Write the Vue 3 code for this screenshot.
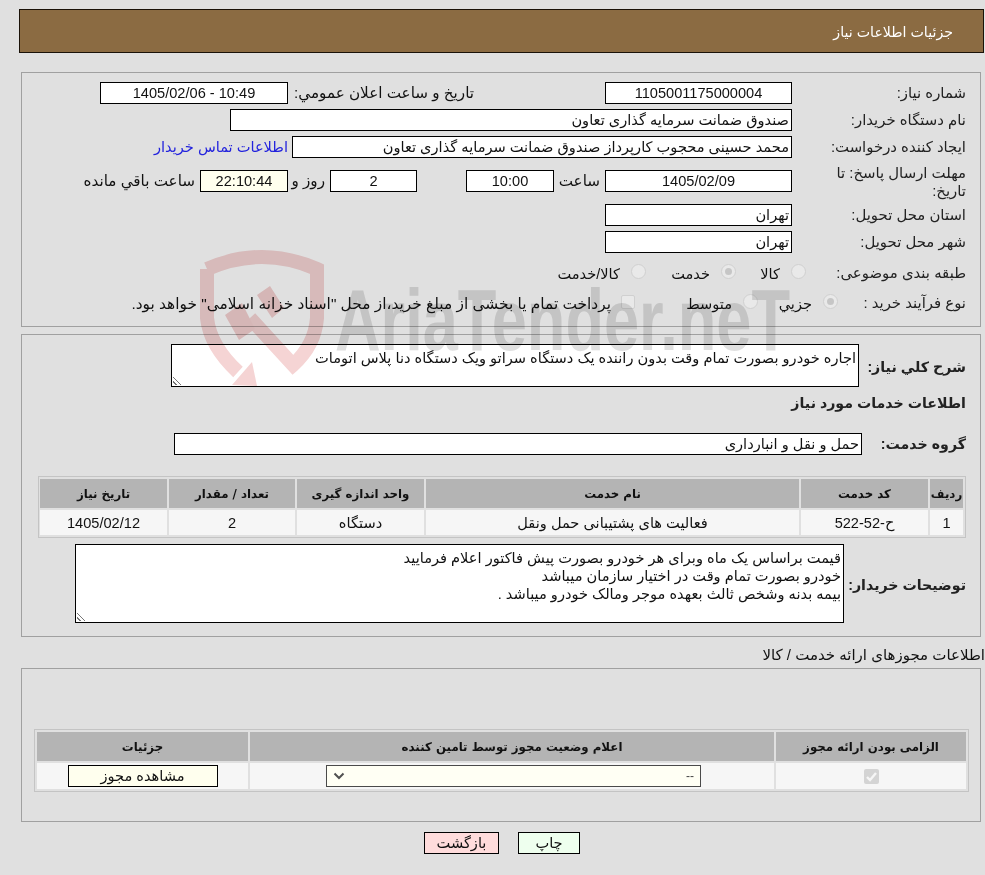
<template>
  <div class="page" dir="rtl">
    <div class="page-head">جزئیات اطلاعات نیاز</div>

    <div class="panel panel-main">
      <div class="row r1">
        <label class="lbl">شماره نیاز:</label>
        <div class="box w-187 center">1105001175000004</div>
        <span class="txt t-announce">تاریخ و ساعت اعلان عمومي:</span>
        <div class="box w-188 center">10:49 - 1405/02/06</div>
      </div>
      <div class="row r2">
        <label class="lbl">نام دستگاه خریدار:</label>
        <div class="box w-562">صندوق ضمانت سرمایه گذاری تعاون</div>
      </div>
      <div class="row r3">
        <label class="lbl">ایجاد کننده درخواست:</label>
        <div class="box w-500">محمد حسینی محجوب کارپرداز صندوق ضمانت سرمایه گذاری تعاون</div>
        <a class="link">اطلاعات تماس خریدار</a>
      </div>
      <div class="row r4">
        <label class="lbl two">مهلت ارسال پاسخ: تا تاریخ:</label>
        <div class="box w-187 center">1405/02/09</div>
        <span class="txt t-hour">ساعت</span>
        <div class="box w-88 center">10:00</div>
        <div class="box w-87 center b-day">2</div>
        <span class="txt t-day">روز و</span>
        <div class="box w-88 center cream">22:10:44</div>
        <span class="txt t-left">ساعت باقي مانده</span>
      </div>
      <div class="row r5">
        <label class="lbl">استان محل تحویل:</label>
        <div class="box w-187">تهران</div>
      </div>
      <div class="row r6">
        <label class="lbl">شهر محل تحویل:</label>
        <div class="box w-187">تهران</div>
      </div>
      <div class="row r7">
        <label class="lbl up">طبقه بندی موضوعی:</label>
        <div class="opts opts-a">
          <span class="radio"></span><span class="opt o-1">کالا</span>
          <span class="radio on"></span><span class="opt o-2">خدمت</span>
          <span class="radio"></span><span class="opt">کالا/خدمت</span>
        </div>
      </div>
      <div class="row r8">
        <label class="lbl up">نوع فرآیند خرید :</label>
        <div class="opts opts-b">
          <span class="radio on"></span><span class="opt o-4">جزيي</span>
          <span class="radio"></span><span class="opt o-5">متوسط</span>
          <span class="check-empty"></span>
          <span class="opt opt-long">پرداخت تمام یا بخشی از مبلغ خرید،از محل "اسناد خزانه اسلامی" خواهد بود.</span>
        </div>
      </div>
    </div>

    <div class="panel panel-need">
      <div class="row n1">
        <label class="blbl l-desc">شرح کلي نیاز:</label>
        <div class="area a-desc">اجاره خودرو بصورت تمام وقت بدون راننده یک دستگاه سراتو ویک دستگاه دنا پلاس اتومات<i class="grip"></i></div>
      </div>
      <div class="sub">اطلاعات خدمات مورد نیاز</div>
      <div class="row n2">
        <label class="blbl l-group">گروه خدمت:</label>
        <div class="box w-688">حمل و نقل و انبارداری</div>
      </div>
      <div class="grid grid-items">
        <div class="th">ردیف</div>
        <div class="th">کد خدمت</div>
        <div class="th">نام خدمت</div>
        <div class="th">واحد اندازه گیری</div>
        <div class="th">تعداد / مقدار</div>
        <div class="th">تاریخ نیاز</div>
        <div class="td">1</div>
        <div class="td">ح-52-522</div>
        <div class="td">فعالیت های پشتیبانی حمل ونقل</div>
        <div class="td">دستگاه</div>
        <div class="td">2</div>
        <div class="td">1405/02/12</div>
      </div>
      <div class="row n3">
        <label class="blbl l-note">توضیحات خریدار:</label>
        <div class="area a-note">قیمت براساس یک ماه وبرای هر خودرو بصورت پیش فاکتور اعلام فرمایید<br>خودرو بصورت تمام وقت در اختیار سازمان میباشد<br>بیمه بدنه وشخص ثالث بعهده موجر ومالک خودرو میباشد .<i class="grip"></i></div>
      </div>
    </div>

    <div class="lic-title">اطلاعات مجوزهای ارائه خدمت / کالا</div>
    <div class="panel panel-lic">
      <div class="grid grid-lic">
        <div class="th">الزامی بودن ارائه مجوز</div>
        <div class="th">اعلام وضعیت مجوز توسط تامین کننده</div>
        <div class="th">جزئیات</div>
        <div class="td"><span class="tick"><svg width="15" height="15" viewBox="0 0 15 15"><path d="M3 8 L6 11 L12 4" fill="none" stroke="#f6f6f6" stroke-width="2.4"/></svg></span></div>
        <div class="td">
          <div class="select">
            <span>--</span>
            <svg width="12" height="8" viewBox="0 0 12 8"><path d="M1.5 1.5 L6 6 L10.5 1.5" fill="none" stroke="#505050" stroke-width="2"/></svg>
          </div>
        </div>
        <div class="td"><button class="view">مشاهده مجوز</button></div>
      </div>
    </div>

    <div class="actions">
      <button class="act print">چاپ</button>
      <button class="act back">بازگشت</button>
    </div>

    <!-- watermark lies over everything, multiplied so text stays readable -->
    <svg class="mark" width="985" height="875" viewBox="0 0 985 875">
      <path d="M207 269 Q262 245 317 269 V318 Q315 345 293 365 L250 318" fill="none" stroke="#f5d4d4" stroke-width="14"/>
      <path d="M207 269 V318 Q210 346 238 372" fill="none" stroke="#f5d4d4" stroke-width="14"/>
      <path d="M232 385 L252 362 L257 386 Z" fill="#f5d4d4"/>
      <path d="M225 315 L242 303 L255 329 L239 340 Z M257 295 L270 286 L284 308 L272 318 Z" fill="#f3d0d0"/>
      <text x="335" y="350" textLength="455" lengthAdjust="spacingAndGlyphs" class="mark-text">AriaTender.neT</text>
    </svg>
  </div>
</template>

<script setup>
</script>

<style>
html, body { background: #e0e0e0; }
</style>

<style scoped>
.page {
  position: relative; width: 985px; height: 875px; overflow: hidden;
  background: #e0e0e0; padding-top: 9px; box-sizing: border-box;
  font-family: "Liberation Sans", "DejaVu Sans", sans-serif; font-size: 14.6px; color: #111;
}
.mark { position: absolute; left: 0; top: 0; direction: ltr; mix-blend-mode: multiply; pointer-events: none; }
.mark-text { font-family: "Liberation Sans", sans-serif; font-weight: 700; font-size: 88px; fill: #e0e0e0; }

.page-head {
  margin: 0 1px 0 19px; height: 44px; box-sizing: border-box;
  background: #8b6b42; border: 1px solid #1a1208;
  color: #fff; font-size: 14.2px; line-height: 44px; padding-right: 30px;
}

.panel {
  margin: 0 4px 0 21px; box-sizing: border-box;
  border: 1px solid #a0a0a0; padding: 1px 0 0 1px;
}
.panel-main { margin-top: 19px; height: 255px; }
.panel-need { margin-top: 7px; height: 303px; }
.panel-lic { margin-top: 3px; height: 154px; }

.row { display: flex; align-items: flex-start; }
.lbl {
  width: 188px; flex-shrink: 0; padding-right: 14px; box-sizing: border-box;
  font-size: 14.9px; line-height: 22px; color: #222;
}
.lbl.two { line-height: 18px; margin-top: -6px; padding-left: 30px; }
.lbl.up { margin-top: -1px; }
.txt { font-size: 15.2px; line-height: 22px; white-space: nowrap; flex-shrink: 0; }

.box {
  height: 22px; box-sizing: border-box; background: #fff; border: 1px solid #000;
  line-height: 20px; padding: 0 2px; white-space: nowrap; overflow: hidden; flex-shrink: 0;
}
.center { text-align: center; }
.cream { background: #ffffee; }
.w-187 { width: 187px; }
.w-188 { width: 188px; }
.w-562 { width: 562px; }
.w-500 { width: 500px; }
.w-88 { width: 88px; }
.w-87 { width: 87px; }
.w-688 { width: 688px; }

.r1 { margin-top: 8px; }
.r2 { margin-top: 5px; }
.r3 { margin-top: 5px; }
.r4 { margin-top: 12px; height: 21px; }
.r5 { margin-top: 13px; }
.r6 { margin-top: 5px; }
.r7 { margin-top: 10px; }
.r8 { margin-top: 8px; }

.t-announce { margin-right: 131px; margin-left: 5px; width: 181px; }
.t-hour { margin: 0 5px; width: 41px; }
.b-day { margin-right: 49px; }
.t-day { margin-right: 5px; width: 37px; }
.t-left { margin-right: 5px; }
.link { color: #2222dd; margin-right: 4px; line-height: 22px; white-space: nowrap; }

.opts { display: flex; align-items: center; height: 22px; white-space: nowrap; }
.opts-a { margin-right: -14px; }
.opts-b { margin-right: -46px; }
.opt { line-height: 22px; }
.opt-long { font-size: 15.4px; }
.radio {
  width: 15px; height: 15px; box-sizing: border-box; border-radius: 50%; border: 1px solid #d0d0d0; background: #e9e9e9;
  position: relative; flex-shrink: 0; margin: -5px 0 0 11px;
}
.radio.on::after {
  content: ""; position: absolute; inset: 3px; border-radius: 50%; background: #c6c6c6;
}
.o-1 { width: 44px; }
.o-2 { width: 64px; }
.o-4 { width: 54px; }
.o-5 { width: 97px; }
.check-empty {
  width: 14px; height: 14px; box-sizing: border-box; border: 1px solid #d0d0d0; border-radius: 2px; background: #e9e9e9;
  flex-shrink: 0; margin: -5px 0 0 10px;
}

.blbl { font-weight: 700; font-size: 14.2px; color: #222; white-space: nowrap; flex-shrink: 0; }
.n1 { margin-top: 8px; height: 43px; }
.l-desc { width: 121px; padding-right: 14px; box-sizing: border-box; line-height: 46px; }
.l-group { width: 118px; padding-right: 14px; box-sizing: border-box; line-height: 22px; }
.l-note { width: 136px; padding-right: 14px; box-sizing: border-box; line-height: 82px; }

.area {
  position: relative; background: #fff; border: 1px solid #000; box-sizing: border-box;
  padding: 4px 2px; line-height: 18px; overflow: hidden;
}
.a-desc { width: 688px; height: 43px; }
.a-note { width: 769px; height: 79px; }
.grip {
  position: absolute; left: 1px; bottom: 1px; width: 9px; height: 9px;
  background: repeating-linear-gradient(45deg, transparent 0 2px, #777 2px 3px);
  clip-path: polygon(0 0, 100% 100%, 0 100%);
}

.sub { font-weight: 700; font-size: 14.2px; color: #222; padding-right: 14px; margin-top: 5px; line-height: 22px; }
.n2 { margin-top: 19px; }

.grid {
  display: grid; gap: 2px; padding: 2px; background: #e0e0e0;
  border: 1px solid #c4c4c4; box-sizing: border-box;
}
.grid-items {
  margin: 21px 14px 0 15px; height: 62px;
  grid-template-columns: 33px 127px 373px 127px 126px 127px;
  grid-template-rows: 29px 25px;
}
.grid-lic {
  margin: 59px 11px 0 11px; height: 63px;
  grid-template-columns: 190px 524px 211px;
  grid-template-rows: 29px 26px;
}
.th {
  background: #b4b4b4; font-family: "DejaVu Sans", sans-serif; font-weight: 700; font-size: 11.8px; color: #111;
  display: flex; align-items: center; justify-content: center; white-space: nowrap;
}
.td {
  background: #f6f6f6;
  display: flex; align-items: center; justify-content: center; white-space: nowrap;
}
.n3 { margin-top: 6px; height: 79px; }

.lic-title { margin-top: 8px; line-height: 20px; height: 20px; font-size: 15px; white-space: nowrap; }

.tick {
  width: 15px; height: 15px; background: #d4d4d4; border-radius: 2px; display: block; line-height: 0;
}
.select {
  width: 375px; height: 22px; box-sizing: border-box; margin-right: -3px;
  border: 1px solid #4a4a4a; background: #fffff4; display: flex; align-items: center;
  justify-content: space-between; padding: 0 6px; font-size: 12px; color: #444;
}
.view {
  width: 150px; height: 22px; box-sizing: border-box; background: #ffffee; border: 1px solid #000;
  font-family: inherit; font-size: 14.6px; color: #111; padding: 0; line-height: 20px;
}

.actions { display: flex; margin-top: 10px; padding-right: 405px; gap: 19px; }
.act {
  height: 22px; box-sizing: border-box; border: 1px solid #000; font-family: inherit; font-size: 14.6px;
  color: #111; padding: 0; line-height: 20px;
}
.print { width: 62px; background: #eeffee; }
.back { width: 75px; background: #ffdcdc; }
</style>
